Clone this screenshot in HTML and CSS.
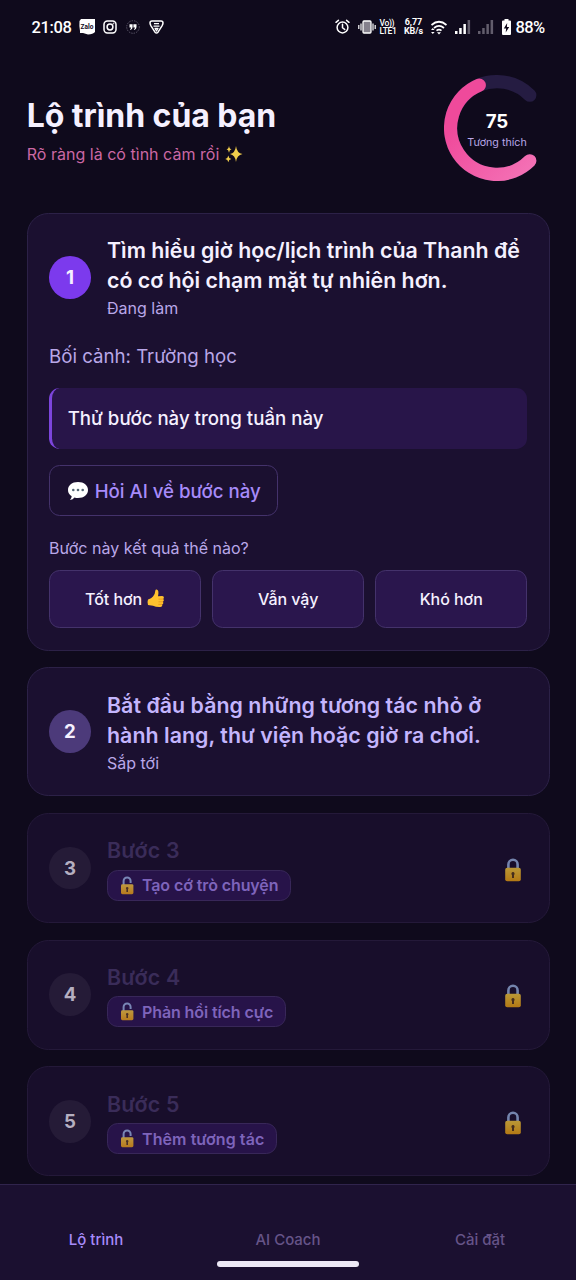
FILE: index.html
```html
<!DOCTYPE html>
<html lang="vi">
<head>
<meta charset="utf-8">
<title>Lộ trình của bạn</title>
<link rel="stylesheet" href="styles.css">
</head>
<body>
<svg class="defs" width="0" height="0" aria-hidden="true">
  <defs>
    <linearGradient id="gold" x1="0" y1="0" x2="0" y2="1"><stop offset="0" stop-color="#ffd23c"/><stop offset="1" stop-color="#f5a70c"/></linearGradient>
    <symbol id="lock" viewBox="0 0 18 24">
      <path d="M4.400 11V6.400a4.600 4.600 0 0 1 9.200 0V11" fill="none" stroke="#9cb7e4" stroke-width="2.600"/>
      <rect x="1.200" y="9.800" width="15.600" height="13.400" rx="2" fill="url(#gold)"/>
      <path d="M9 14a1.700 1.700 0 0 1 1 3v3H8v-3a1.700 1.700 0 0 1 1-3z" fill="#5a3b17"/>
    </symbol>
    <symbol id="unlock" viewBox="0 0 14 19">
      <path d="M3.600 9V5a3.500 3.500 0 0 1 7 0V7" fill="none" stroke="#9cb7e4" stroke-width="2"/>
      <rect x="1" y="8.200" width="12.400" height="10" rx="1.400" fill="url(#gold)"/>
      <path d="M7.200 11a1.300 1.300 0 0 1 .8 2.300v2.600H6.400v-2.600A1.300 1.300 0 0 1 7.200 11z" fill="#5a3b17"/>
    </symbol>
  </defs>
</svg>
<div class="screen">
  <div class="status">
    <span class="clock">21:08</span>
    <svg class="zalo" width="16" height="16" viewBox="0 0 16 16"><path d="M2 0h14v13q-2 2-7 2.500L4 14H1V12Q0 7 .5 2z" fill="#fff"/><text x="8" y="9.500" class="zalo-text">Zalo</text></svg>
    <svg class="insta" width="14" height="14" viewBox="0 0 14 14" fill="none" stroke="#fff" stroke-width="1.500"><rect x="1" y="1" width="12" height="12" rx="3.400"/><circle cx="7" cy="7" r="2.900"/><circle cx="10.500" cy="3.500" r=".5" stroke-width=".8"/></svg>
    <svg class="quote" width="14" height="14" viewBox="0 0 14 14"><circle cx="7" cy="7" r="6.300" fill="none" stroke="#777184" stroke-width=".7" stroke-dasharray="1.500 1"/><path d="M3.500 4.300h3.100v2.700q0 2-2 2.900l-.6-.7q1.100-.6 1.100-1.700H3.500zM7.400 4.300h3.100v2.700q0 2-2 2.900l-.6-.7q1.100-.6 1.100-1.700H7.400z" fill="#fff"/></svg>
    <svg class="shield" width="15" height="14" viewBox="0 0 15 14" fill="none" stroke="#fff" stroke-width="1.500" stroke-linejoin="round"><path d="M1 3Q1 1 3 1h9q2 0 2 2 0 1-1 2.800L9 12.200q-1.500 1.500-3 0L2 5.800Q1 4 1 3z"/><path d="M4.500 6.200h6M5 3.600h5M6 8.300h3L7.500 11z" stroke-width="1.300"/></svg>
    <div class="status-right">
      <svg class="alarm" width="15" height="16" viewBox="0 0 15 16" fill="none" stroke="#fff" stroke-width="1.500" stroke-linecap="round"><circle cx="7.500" cy="8.500" r="5.400"/><path d="M7.500 5.300v3.400l2.200 1.800M1 3.300l2.400-2M14 3.300l-2.400-2"/></svg>
      <svg class="vibrate" width="18" height="14" viewBox="0 0 18 14"><rect x="5" y="1" width="8" height="12" rx="1" fill="#85818d" stroke="#fff" stroke-width="1.300"/><path d="M3 3.500v7M.8 5v4M15 3.500v7M17.200 5v4" stroke="#fff" stroke-width="1.200"/></svg>
      <div class="tiny volte"><span>Vo))</span><span>LTE1</span></div>
      <div class="tiny speed"><span>6,77</span><span>KB/s</span></div>
      <svg class="wifi" width="18" height="15" viewBox="0 0 18 15" fill="none" stroke="#fff" stroke-width="1.700"><path d="M1.500 5Q9-1.500 16.500 5M4 8q5-4.200 10 0M6.500 10.600q2.500-2 5 0"/><path d="M9 14.500l-2-2.300h4zM2.800 8L1 10h3.600zM2.800 14L1 12h3.600z" fill="#fff" stroke="none"/></svg>
      <svg class="signal" width="16" height="14" viewBox="0 0 16 14" fill="#fff"><rect y="11" width="2.500" height="3"/><rect x="4.200" y="8" width="2.500" height="6"/><rect x="8.400" y="4" width="2.500" height="10"/><rect x="12.600" width="2.500" height="14" fill="#625d6c"/></svg>
      <svg class="signal2" width="16" height="14" viewBox="0 0 16 14" fill="#625d6c"><rect y="11" width="2.500" height="3"/><rect x="4.200" y="8" width="2.500" height="6"/><rect x="8.400" y="4" width="2.500" height="10"/><rect x="12.600" width="2.500" height="14"/></svg>
      <svg class="battery" width="9" height="16" viewBox="0 0 9 16"><path d="M2.500 0h4v1.500H8q1 0 1 1V15q0 1-1 1H1q-1 0-1-1V2.500q0-1 1-1h1.500z" fill="#fff"/><path d="M5.200 4L1.800 9.500h2.300L3.700 13.500 7.200 8H4.900z" fill="#100a1c"/></svg>
      <span class="percent">88%</span>
    </div>
  </div>

  <header class="header">
    <div>
      <h1 class="title">Lộ trình của bạn</h1>
      <p class="tagline"><span class="tagline-text">Rõ ràng là có tình cảm rồi</span>
        <svg width="18" height="18" viewBox="0 0 18 18" fill="#f0cd4c"><path d="M11 1q.8 7 6.500 8-5.700 1-6.500 8-.8-7-6-8 5.200-1 6-8zM4 .8Q4.400 4 6.500 4.300 4.400 4.700 4 7.800 3.600 4.700 1.500 4.300 3.600 4 4 .8zM3.300 10.500q.4 3 3 3.400-2.600.4-3 3.400-.4-3-3-3.400 2.600-.4 3-3.400z"/></svg>
      </p>
    </div>
    <div class="gauge">
      <svg class="gauge-ring" width="106" height="106" viewBox="0 0 106.670 106.670" fill="none" stroke-width="13.330" stroke-linecap="round">
        <defs><linearGradient id="pink" x1="0" y1="0" x2="1" y2="1"><stop offset=".25" stop-color="#ef4a9b"/><stop offset="1" stop-color="#f472b6"/></linearGradient></defs>
        <path d="M86.330 86.330A46.670 46.670 0 1 1 86.330 20.330" stroke="#251c42"/>
        <path d="M86.330 86.330A46.670 46.670 0 1 1 35.470 10.220" stroke="url(#pink)"/>
      </svg>
      <div class="gauge-label"><strong class="score">75</strong><span class="score-name">Tương thích</span></div>
    </div>
  </header>

  <main class="steps">
    <section class="card">
      <div class="step">
        <span class="num num-active">1</span>
        <div><h2 class="step-title">Tìm hiểu giờ học/lịch trình của Thanh để<br>có cơ hội chạm mặt tự nhiên hơn.</h2><p class="state">Đang làm</p></div>
      </div>
      <p class="context">Bối cảnh: Trường học</p>
      <div class="task">Thử bước này trong tuần này</div>
      <button class="ask"><svg width="22" height="20" viewBox="0 0 22 20"><path d="M11 1c6 0 10 3.400 10 8s-4 8-10 8q-2 0-3.500-.5Q6 18.500 3 19q1.500-1.500 1.700-3.800Q1 13 1 9c0-4.600 4-8 10-8z" fill="#fff"/><g fill="#546775"><circle cx="6.300" cy="9" r="1.300"/><circle cx="11" cy="9" r="1.300"/><circle cx="15.700" cy="9" r="1.300"/></g></svg><span>Hỏi AI về bước này</span></button>
      <p class="question">Bước này kết quả thế nào?</p>
      <div class="answers">
        <button class="answer"><span>Tốt hơn</span><svg width="18" height="19" viewBox="0 0 18 19"><path d="M1 10.500Q4.500 9.500 6 7.500 8.200 5 8.300 1.800 8.500.3 9.800.6q2.500.7 1.200 6.600l4.200-.2q1.900.1 1.700 1.700-.1.900-.8 1.200 1 .6.700 1.700-.2.900-1 1.200.8.700.4 1.700-.3.900-1.200 1 .5.700.1 1.400-.5.900-1.900 1-4 .2-7.200-1.200L1 16Q0 13 1 10.500z" fill="#ffc12e"/><path d="M11.500 10.100h4.600M11.500 12.800h4.500M11.300 15.400h3.800" stroke="#e28b16" stroke-width=".7"/></svg></button>
        <button class="answer">Vẫn vậy</button>
        <button class="answer">Khó hơn</button>
      </div>
    </section>

    <section class="card">
      <div class="step">
        <span class="num num-next">2</span>
        <div><h2 class="step-title next">Bắt đầu bằng những tương tác nhỏ ở<br>hành lang, thư viện hoặc giờ ra chơi.</h2><p class="state">Sắp tới</p></div>
      </div>
    </section>

    <section class="card locked">
      <div class="step"><span class="num">3</span><div class="grow"><h2 class="step-title">Bước 3</h2><span class="chip"><svg width="14" height="19"><use href="#unlock"/></svg><span>Tạo cớ trò chuyện</span></span></div><svg class="lock" width="18" height="24"><use href="#lock"/></svg></div>
    </section>
    <section class="card locked">
      <div class="step"><span class="num">4</span><div class="grow"><h2 class="step-title">Bước 4</h2><span class="chip"><svg width="14" height="19"><use href="#unlock"/></svg><span>Phản hồi tích cực</span></span></div><svg class="lock" width="18" height="24"><use href="#lock"/></svg></div>
    </section>
    <section class="card locked">
      <div class="step"><span class="num">5</span><div class="grow"><h2 class="step-title">Bước 5</h2><span class="chip"><svg width="14" height="19"><use href="#unlock"/></svg><span class="wide">Thêm tương tác</span></span></div><svg class="lock" width="18" height="24"><use href="#lock"/></svg></div>
    </section>
  </main>

  <nav class="nav">
    <div class="tabs"><span class="tab tab-on">Lộ trình</span><span class="tab">AI Coach</span><span class="tab">Cài đặt</span></div>
    <div class="home"></div>
  </nav>
</div>
</body>
</html>
```

FILE: styles.css
```css
* { box-sizing: border-box; }
body, h1, h2, p { margin: 0; }
body { background: #0f0a1c; color: #f5f0ff; font-family: Inter, "Noto Sans", sans-serif; }
svg { display: block; flex: none; }
.defs { position: absolute; }
.screen { width: 576px; height: 1280px; overflow: hidden; display: flex; flex-direction: column; }

.status { display: flex; align-items: center; height: 54px; padding: 0 31.500px 0 31.500px; font-family: Roboto, sans-serif; color: #fff; flex: none; }
.clock { font-size: 16.500px; letter-spacing: -.35px; font-weight: 500; width: 47.500px; }
.zalo-text { font: bold 6.500px Roboto, sans-serif; text-anchor: middle; fill: #100a1c; }
.insta { margin-left: 8px; }
.quote { margin-left: 9px; }
.shield { margin-left: 9px; }
.status-right { display: flex; align-items: center; margin-left: auto; }
.vibrate { margin-left: 8px; }
.tiny { display: flex; flex-direction: column; align-items: center; font-size: 9px; line-height: 9.500px; font-weight: 700; letter-spacing: -.1px; }
.volte { margin-left: 3.500px; width: 20px; font-size: 8.500px; line-height: 8px; font-weight: 500; letter-spacing: -.3px; align-items: flex-start; }
.speed { margin-left: 4px; width: 20px; }
.wifi { margin-left: 7px; }
.signal { margin-left: 6.500px; }
.signal2 { margin-left: 7px; }
.battery { margin-left: 8px; }
.percent { margin-left: 4.500px; font-size: 16.500px; font-weight: 500; letter-spacing: -.6px; padding-top: 1px; }

.header { display: flex; justify-content: space-between; align-items: center; height: 107px; margin-top: 20.500px; padding: 0 26px 0 26.700px; flex: none; }
.title { font-size: 32px; line-height: 40px; letter-spacing: -.05px; font-weight: 700; margin-top: 3px; }
.tagline { display: flex; align-items: center; gap: 5.500px; margin-top: 8px; font-size: 16px; line-height: 20px; color: #cb68a4; }
.tagline-text { letter-spacing: .02px; }
.gauge { display: grid; width: 106px; height: 107px; }
.gauge-ring, .gauge-label { grid-area: 1 / 1; }
.gauge-label { display: flex; flex-direction: column; align-items: center; justify-content: center; padding-top: 4px; }
.score { font-size: 18.700px; line-height: 23px; color: #fff; }
.score-name { font-size: 10.700px; line-height: 14px; margin-top: 3px; color: #b9a7e8; white-space: nowrap; }

.steps { display: flex; flex-direction: column; gap: 16.670px; padding: 31.300px 26.300px 0 26.700px; height: 1002.700px; overflow: hidden; flex: none; }
.card { border: 1.330px solid #2c2147; border-radius: 21.330px; background: #1b1030; padding: 21.400px 21.300px 21.500px; flex: none; }
.step { display: flex; align-items: center; gap: 16px; }
.num { width: 42px; height: 42.670px; border-radius: 50%; display: flex; align-items: center; justify-content: center; font-size: 18.670px; font-weight: 700; background: #2c223f; flex: none; }
.num-active { background: #7c3aed; }
.num-next { background: #4c3a7a; }
.step-title { font-size: 21.330px; line-height: 30px; letter-spacing: 0; font-weight: 600; white-space: nowrap; }
.next { color: #c4b5fd; letter-spacing: .05px; }
.state { font-size: 16px; line-height: 21.300px; margin-top: 3px; color: #b9a7e8; }
.context { font-size: 18.670px; line-height: 26px; margin-top: 24.100px; color: #b9a7e8; }
.task { height: 61px; margin-top: 18.500px; border-left: 3px solid #7c45dc; border-radius: 10.670px; background: #281549; display: flex; align-items: center; padding: 0 0 0 15.700px; font-size: 18.670px; font-weight: 500; }
button { font-family: inherit; color: inherit; margin: 0; }
.ask { display: flex; align-items: center; justify-content: center; gap: 6px; width: 229.500px; height: 51px; margin-top: 16px; padding: 1px 0 0; border: 1.330px solid #44326b; border-radius: 10.670px; background: none; font-size: 18.670px; font-weight: 500; color: #a78bfa; white-space: nowrap; }
.question { font-size: 16px; line-height: 22px; margin-top: 21px; color: #b9a7e8; }
.answers { display: grid; grid-template-columns: repeat(3, 1fr); gap: 10.700px; margin-top: 11.300px; }
.answer { display: flex; align-items: center; justify-content: center; gap: 5px; height: 57.700px; padding: 0 0 1px; border: 1.330px solid #44326b; border-radius: 10.670px; background: #2a164d; font-size: 16px; font-weight: 500; letter-spacing: -.05px; }

.locked { background: #180e2b; border-color: #241939; padding-bottom: 21.300px; }
.locked .num { background: #251b37; color: #b5afc0; }
.locked .step-title { color: #3a2c59; letter-spacing: .3px; }
.grow { flex: 1; }
.chip { display: inline-flex; align-items: center; gap: 7.500px; height: 31px; margin-top: 4.300px; padding: 0 11.500px 0 12.500px; border: 1.330px solid #382759; border-radius: 10.670px; background: #271349; font-size: 16px; letter-spacing: -.1px; font-weight: 600; color: #7e64bb; vertical-align: top; }
.chip .wide { letter-spacing: .08px; }
.chip svg, .lock { opacity: .7; }
.lock { margin: 3px 5px 0 0; }

.nav { flex: 1; border-top: 1.330px solid #30244c; background: #1b1030; display: flex; flex-direction: column; align-items: center; }
.tabs { display: grid; grid-template-columns: repeat(3, 1fr); width: 100%; margin-top: 45px; text-align: center; font-size: 15px; line-height: 20px; font-weight: 500; color: #665488; }
.tab-on { color: #a78bfa; }
.home { width: 142px; height: 6px; border-radius: 3px; background: #ede8f5; margin-top: 11px; }
```
